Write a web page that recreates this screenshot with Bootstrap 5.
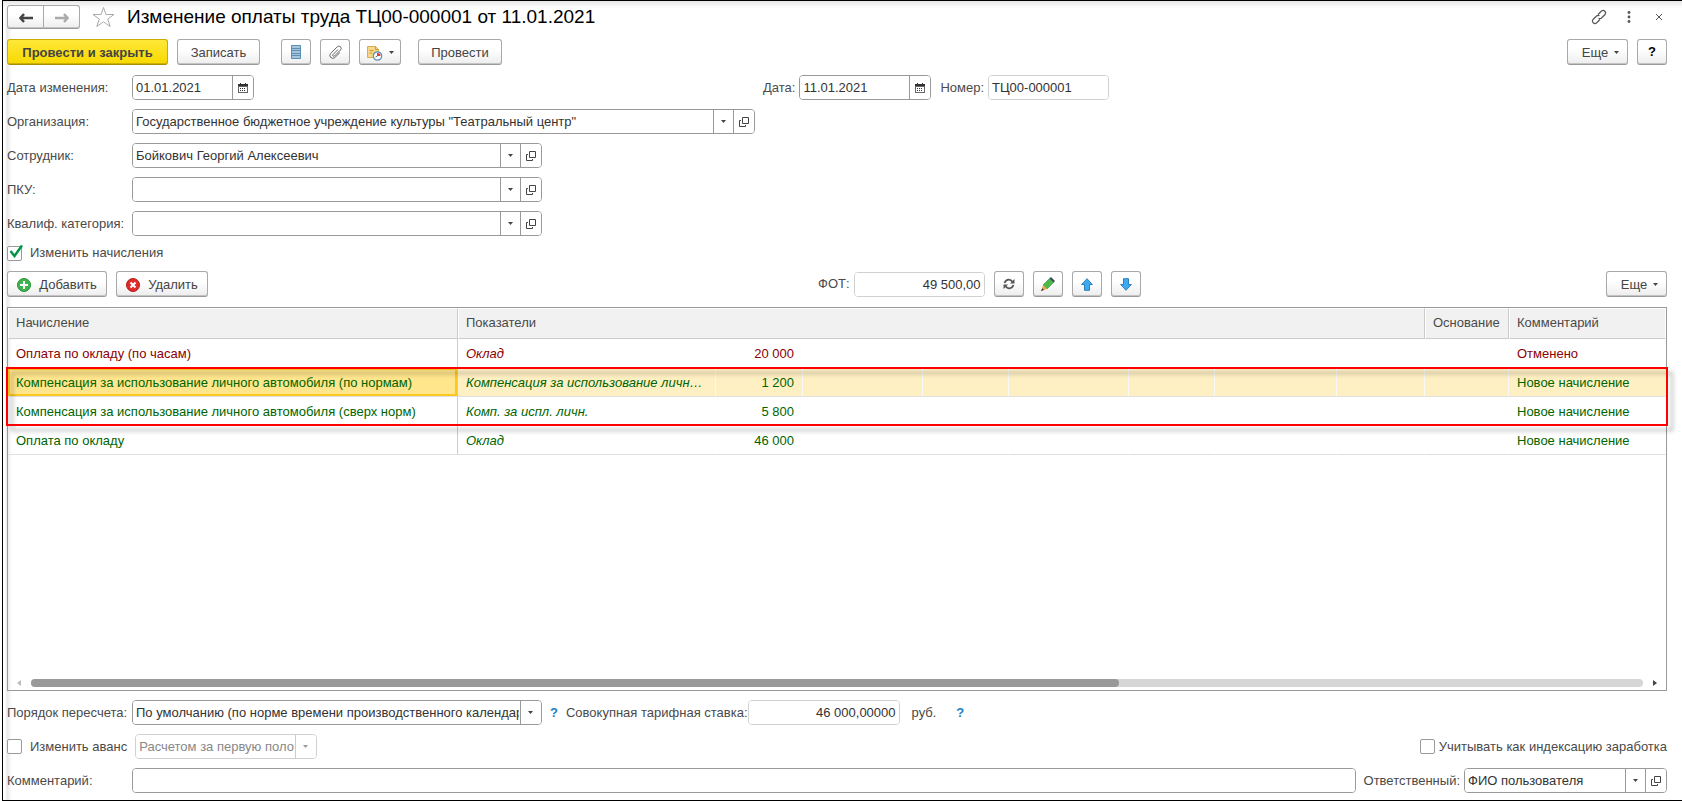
<!DOCTYPE html>
<html lang="ru">
<head>
<meta charset="utf-8">
<meta name="viewport" content="width=device-width, initial-scale=1">
<title>Изменение оплаты труда</title>
<link href="https://cdn.jsdelivr.net/npm/bootstrap@5.3.0/dist/css/bootstrap.min.css" rel="stylesheet">
<style>
  body { font-family: "Liberation Sans", Arial, sans-serif; font-size: 13px; line-height: 16px; color: #4a4a4a; background: #fff; }
  svg { display: block; flex: none; }
  .doc-window { margin-left: 2px; min-height: 100vh; padding: 4px 15px 7px 4px; border: solid #000; border-width: 1px 0 1px 1px;
    background: linear-gradient(#e6e6e6, #fff 7px) top / 100% 7px no-repeat, linear-gradient(90deg, #fff 2px, #e9e9e9 4px, #fff 9px) #fff; }
  .doc-title { font-size: 19px; line-height: 24px; color: #000; }
  .bar { margin-top: 10px; }
  .gap-tools { gap: 9px; }

  .cmd { height: 26px; padding: 1px 7px 0; font-size: 13px; line-height: 16px; color: #444; border: 1px solid #a9a9a9; border-bottom-color: #999; box-shadow: inset 0 -1px #c4c4c4; border-radius: 3px;
    background: linear-gradient(#fff 40%, #ededed); display: inline-flex; align-items: center; justify-content: center; }
  .cmd:hover { background: #f1f1f1; }
  .cmd-main { color: #444; font-weight: 700; width: 161px; border-color: #c9ac00; border-bottom-color: #a89000; box-shadow: inset 0 -1px #cdb200; background: linear-gradient(#ffe838, #f7d900); }
  .cmd-icon { width: 30px; padding: 0; }
  .cmd-write { width: 83px; }
  .cmd-post { width: 84px; }
  .cmd-add { width: 100px; }
  .cmd-del { width: 92px; }
  .cmd-more { width: 61px; gap: 6px; padding-left: 13px; }
  .cmd-menu { width: 42px; gap: 6px; }
  .nav-pair .cmd { height: 24px; width: 37px; }
  .bare { border: 0; padding: 0; background: none; color: #555; }

  .field-label { width: 125px; flex: none; white-space: nowrap; }
  .field { height: 25px; flex-wrap: nowrap; border: 1px solid #999; border-radius: 4px; background: #fff; overflow: hidden; }
  .field input, .field select { flex: 1 1 0; min-width: 0; height: 100%; border: 0; outline: 0; background-color: #fff; color: #333; padding: 0 3px; font-size: 13px; line-height: 16px; }
  .field select { appearance: none; padding-right: 22px; background-repeat: no-repeat; background-position: right 8px center, right 20px top;
    background-image: url("data:image/svg+xml,%3Csvg xmlns='http://www.w3.org/2000/svg' width='5' height='3'%3E%3Cpath d='M0 0h5L2.5 3z' fill='%23444'/%3E%3C/svg%3E"), linear-gradient(#999, #999); background-size: 5px 3px, 1px 100%; }
  .field select:disabled { color: #888; opacity: 1;
    background-image: url("data:image/svg+xml,%3Csvg xmlns='http://www.w3.org/2000/svg' width='5' height='3'%3E%3Cpath d='M0 0h5L2.5 3z' fill='%23999'/%3E%3C/svg%3E"), linear-gradient(#ccc, #ccc); }
  .field button { width: 21px; padding: 0; border: 0; border-left: 1px solid #999; background: #fff; color: #444; display: flex; align-items: center; justify-content: center; }
  .field-quiet { border-color: #d0d0d0; }
  .w-date { width: 122px; }
  .w-docdate { width: 132px; }
  .w-number { width: 121px; }
  .w-sum { width: 131px; }
  .w-rate { width: 152px; }
  .w-ref { width: 410px; }
  .w-advance { width: 182px; }
  .w-user { width: 203px; }
  .w-head { width: 748px; }
  .w-edit { width: 811px; }

  .tick { appearance: none; width: 15px; height: 15px; margin: 0; border: 1px solid #999; border-radius: 2px; background: #fff; flex: none; }
  .tick-wrap svg { left: 2px; top: -2px; pointer-events: none; }
  .hint { color: #1a7ec4; font-weight: 700; text-decoration: none; }

  .sheet { border: 1px solid #999; min-height: 200px; }
  .accruals { table-layout: fixed; width: 100%; border-collapse: separate; border-spacing: 0; }
  .accruals th { height: 31px; padding: 0 7px 2px; font-weight: 400; background: #f1f1f1; border: 1px solid #fff; border-right-color: #ccc; border-bottom-color: #ccc; white-space: nowrap; }
  .accruals th:last-child { border-right-color: #fff; }
  .accruals td { height: 29px; padding: 1px 8px 0; border-bottom: 1px solid #e0e0e0; border-right: 1px solid transparent; white-space: nowrap; color: #006400; }
  .accruals tbody tr:first-child td { color: #8b0000; }
  .accruals td:nth-child(1) { border-right-color: #ccc; }
  .accruals td:nth-child(2) { font-style: italic; }
  .accruals .picked td { background: #fff0c4; background-clip: padding-box; border-right-color: #f8f8f8; }
  .accruals .picked td:nth-child(1) { background: #ffe58c; box-shadow: inset 0 0 0 2px #fac81e; border-right-color: #ccc; }
  .callout-frame { left: -2px; right: -2px; top: 59px; height: 59px; border: 2px solid #f00; filter: drop-shadow(5px 5px 2px rgba(0,0,0,.3)); pointer-events: none; }
  .hscroll { padding: 0 9px 3px; gap: 10px; }
  .hscroll-track { height: 8px; border-radius: 4px; background: #d6d6d6; }
  .hscroll-thumb { height: 8px; border-radius: 4px; background: #999; }
</style>
</head>
<body>
<svg width="0" height="0" class="position-absolute" aria-hidden="true">
  <symbol id="i-caret" viewBox="0 0 5 3"><path d="M0 0h5L2.500 3z" fill="currentColor"/></symbol>
  <symbol id="i-open" viewBox="0 0 10 10"><path d="M3.500.500h6v6h-6zM2 3.500H.500v6h6V8" fill="none" stroke="currentColor"/></symbol>
  <symbol id="i-cal" viewBox="0 0 10 10"><path d="M0 1h10v9H0z" fill="#666"/><path d="M0 1h10v2H0zM2 0h1v1H2zM7 0h1v1H7z" fill="#333"/><path d="M1 4h8v5H1z" fill="#fff"/><path d="M2 5h1v1H2zM4 5h1v1H4zM6 5h1v1H6zM2 7h1v1H2zM4 7h1v1H4zM6 7h1v1H6z" fill="#333"/></symbol>
</svg>

<main class="doc-window d-flex flex-column">
  <header class="d-flex align-items-center">
    <div class="btn-group nav-pair">
      <button class="btn cmd" type="button" aria-label="Назад"><svg width="14" height="10"><path d="M5 1L1.500 5 5 9M2 5h12" fill="none" stroke="#444" stroke-width="2.500"/></svg></button>
      <button class="btn cmd" type="button" aria-label="Вперед"><svg width="14" height="10"><path d="M9 1l3.500 4L9 9M12 5H0" fill="none" stroke="#aaa" stroke-width="2.500"/></svg></button>
    </div>
    <button class="bare mx-2 px-1" type="button" aria-label="В избранное"><svg width="23" height="22"><path d="M11.500 1.500l2.500 7h8l-6.300 4.500 2.500 7.500-6.700-4.700-6.700 4.700 2.500-7.500L1 8.500h8z" fill="#fff" stroke="#aaa"/></svg></button>
    <h1 class="doc-title mb-0">Изменение оплаты труда ТЦ00-000001 от 11.01.2021</h1>
    <div class="d-flex align-items-center ms-auto gap-3 pe-1">
      <button class="bare" type="button" aria-label="Ссылка"><svg width="16" height="16" fill="none" stroke="#555" stroke-width="1.200"><path d="M7 5.500L10.500 2a2.500 2.500 0 0 1 3.500 3.500L10.500 9q-1.500 1.200-3 .3M9 10.500L5.500 14A2.500 2.500 0 0 1 2 10.500L5.500 7q1.500-1.200 3-.3"/></svg></button>
      <button class="bare me-1" type="button" aria-label="Меню"><svg width="12" height="12" fill="#555"><circle cx="6" cy="1.500" r="1.400"/><circle cx="6" cy="6" r="1.400"/><circle cx="6" cy="10.500" r="1.400"/></svg></button>
      <button class="bare" type="button" aria-label="Закрыть"><svg width="8" height="8"><path d="M1 1l6 6M7 1L1 7" stroke="#555"/></svg></button>
    </div>
  </header>

  <div class="d-flex align-items-center gap-tools bar">
    <button class="btn cmd cmd-main" type="button">Провести и закрыть</button>
    <button class="btn cmd cmd-write" type="button">Записать</button>
    <div class="d-flex gap-tools mx-2 ps-1">
      <button class="btn cmd cmd-icon" type="button" aria-label="Движения документа"><svg width="10" height="14"><path d="M0 0h10v14H0z" fill="#a5c6da"/><path d="M.5.500h9v13h-9zM1 3.500h8M1 5.500h8M1 8.500h8M1 10.500h8" fill="none" stroke="#5d8fb3"/></svg></button>
      <button class="btn cmd cmd-icon" type="button" aria-label="Файлы"><svg width="14" height="14" fill="none" stroke="#666"><path d="M10 4.500L5 9.500a1 1 0 0 0 1.500 1.500l6-6A2.200 2.200 0 0 0 9.300 1.800L2.500 8.500a3 3 0 0 0 4.200 4.200l5.300-5.200"/></svg></button>
      <button class="btn cmd cmd-menu" type="button" aria-label="Отчеты"><svg width="16" height="16"><path d="M.5 1.500h8l3 3v8h-11z" fill="#f7d889" stroke="#d9ae50"/><path d="M8.500 1.500v3h3M2.500 5.500h4M2.500 8h3" fill="none" stroke="#c99c3d"/><circle cx="10.500" cy="11" r="4.200" fill="#fff" stroke="#5b8dbb" stroke-width="1.200"/><path d="M10.500 11V8a3 3 0 0 1 3 3z" fill="#e04030"/><path d="M10.500 8v3l-2 1" fill="none" stroke="#3f76a8"/></svg><svg width="5" height="3"><use href="#i-caret"/></svg></button>
    </div>
    <button class="btn cmd cmd-post" type="button">Провести</button>
    <button class="btn cmd cmd-more ms-auto" type="button">Еще <svg width="5" height="3"><use href="#i-caret"/></svg></button>
    <button class="btn cmd cmd-icon fw-bold text-black" type="button">?</button>
  </div>

  <form class="d-flex flex-column flex-grow-1">
    <div class="d-flex align-items-center bar">
      <div class="d-flex align-items-center w-head">
        <label class="field-label" for="changeDate">Дата изменения:</label>
        <div class="input-group field w-date"><input id="changeDate" type="text" value="01.01.2021"><button type="button" aria-label="Календарь"><svg width="10" height="10"><use href="#i-cal"/></svg></button></div>
      </div>
      <div class="d-flex align-items-center gap-tools ps-2">
        <div class="d-flex align-items-center gap-1">
          <label for="docDate">Дата:</label>
          <div class="input-group field w-docdate"><input id="docDate" type="text" value="11.01.2021"><button type="button" aria-label="Календарь"><svg width="10" height="10"><use href="#i-cal"/></svg></button></div>
        </div>
        <div class="d-flex align-items-center gap-1">
          <label for="docNumber">Номер:</label>
          <div class="input-group field field-quiet w-number"><input id="docNumber" type="text" value="ТЦ00-000001" readonly></div>
        </div>
      </div>
    </div>
    <div class="d-flex flex-column gap-tools" style="margin-top:9px">
      <div class="d-flex align-items-center w-head">
        <label class="field-label" for="org">Организация:</label>
        <div class="input-group field flex-fill"><select id="org"><option>Государственное бюджетное учреждение культуры "Театральный центр"</option></select><button type="button" aria-label="Открыть"><svg width="10" height="10"><use href="#i-open"/></svg></button></div>
      </div>
      <div class="d-flex align-items-center">
        <label class="field-label" for="employee">Сотрудник:</label>
        <div class="input-group field w-ref"><select id="employee"><option>Бойкович Георгий Алексеевич</option></select><button type="button" aria-label="Открыть"><svg width="10" height="10"><use href="#i-open"/></svg></button></div>
      </div>
      <div class="d-flex align-items-center">
        <label class="field-label" for="pku">ПКУ:</label>
        <div class="input-group field w-ref"><select id="pku"><option></option></select><button type="button" aria-label="Открыть"><svg width="10" height="10"><use href="#i-open"/></svg></button></div>
      </div>
      <div class="d-flex align-items-center">
        <label class="field-label" for="category">Квалиф. категория:</label>
        <div class="input-group field w-ref"><select id="category"><option></option></select><button type="button" aria-label="Открыть"><svg width="10" height="10"><use href="#i-open"/></svg></button></div>
      </div>
      <div class="d-flex align-items-center">
        <span class="position-relative tick-wrap"><input class="tick d-block" type="checkbox" id="editAccruals" checked><svg class="position-absolute" width="14" height="14"><path d="M1.500 7l4 5L13 1.500" fill="none" stroke="#009646" stroke-width="2.500"/></svg></span>
        <label class="ps-1 ms-1" for="editAccruals">Изменить начисления</label>
      </div>
    </div>

    <div class="d-flex align-items-center bar">
      <div class="d-flex w-edit gap-tools">
        <button class="btn cmd cmd-add gap-2" type="button"><svg width="14" height="14"><circle cx="7" cy="7" r="6.500" fill="#3db54a" stroke="#23913a"/><path d="M7 3v8M3 7h8" stroke="#fff" stroke-width="2"/></svg>Добавить</button>
        <button class="btn cmd cmd-del gap-2" type="button"><svg width="14" height="14"><circle cx="7" cy="7" r="6.500" fill="#dd2b2b" stroke="#b81c1c"/><path d="M4.500 4.500l5 5M9.500 4.500l-5 5" stroke="#fff" stroke-width="2"/></svg>Удалить</button>
      </div>
      <div class="d-flex align-items-center gap-tools">
        <div class="d-flex align-items-center gap-1">
          <label for="fot">ФОТ:</label>
          <div class="input-group field field-quiet w-sum"><input id="fot" class="text-end" type="text" value="49 500,00" readonly></div>
        </div>
        <button class="btn cmd cmd-icon" type="button" aria-label="Обновить"><svg width="12" height="12" fill="none" stroke="#555" stroke-width="1.800"><path d="M1.500 5Q3 1.500 6 1.700q2 .1 3.500 2M10.500 7Q9 10.500 6 10.300q-2-.1-3.500-2"/><path d="M11.500 1v4.500H7zM.5 11V6.500H5z" fill="#555" stroke="none"/></svg></button>
        <button class="btn cmd cmd-icon" type="button" aria-label="Изменить"><svg width="14" height="14"><path d="M10 0l4 4-2 2-4-4z" fill="#3c4a5c"/><path d="M8.500 1.500l4 4-6.500 6.500-4-4z" fill="#4fb848" stroke="#2f8f3a" stroke-width=".6"/><path d="M2 8l4 4-5.500 1.700z" fill="#f3a74a"/><path d="M1.200 11.200l1.800 1.700L0 14z" fill="#333"/></svg></button>
        <button class="btn cmd cmd-icon" type="button" aria-label="Вверх"><svg width="12" height="13"><path d="M6 .7l5.300 5.800H8.500v5.800h-5V6.500H.7z" fill="#3fa9f0" stroke="#2a7fbd"/></svg></button>
        <button class="btn cmd cmd-icon" type="button" aria-label="Вниз"><svg width="12" height="13"><path d="M6 12.300L.7 6.500h2.800V.7h5v5.800h2.800z" fill="#3fa9f0" stroke="#2a7fbd"/></svg></button>
      </div>
      <button class="btn cmd cmd-more ms-auto" type="button">Еще <svg width="5" height="3"><use href="#i-caret"/></svg></button>
    </div>

    <section class="sheet position-relative flex-grow-1 d-flex flex-column bar">
      <table class="accruals">
        <colgroup><col style="width:450px"><col style="width:258px"><col style="width:87px"><col style="width:120px"><col style="width:86px"><col style="width:120px"><col style="width:86px"><col style="width:122px"><col><col style="width:84px"><col style="width:157px"></colgroup>
        <thead><tr><th>Начисление</th><th colspan="8">Показатели</th><th>Основание</th><th>Комментарий</th></tr></thead>
        <tbody>
          <tr><td>Оплата по окладу (по часам)</td><td>Оклад</td><td class="text-end">20 000</td><td></td><td></td><td></td><td></td><td></td><td></td><td></td><td>Отменено</td></tr>
          <tr class="picked"><td>Компенсация за использование личного автомобиля (по нормам)</td><td>Компенсация за использование личн…</td><td class="text-end">1 200</td><td></td><td></td><td></td><td></td><td></td><td></td><td></td><td>Новое начисление</td></tr>
          <tr><td>Компенсация за использование личного автомобиля (сверх норм)</td><td>Комп. за испл. личн.</td><td class="text-end">5 800</td><td></td><td></td><td></td><td></td><td></td><td></td><td></td><td>Новое начисление</td></tr>
          <tr><td>Оплата по окладу</td><td>Оклад</td><td class="text-end">46 000</td><td></td><td></td><td></td><td></td><td></td><td></td><td></td><td>Новое начисление</td></tr>
        </tbody>
      </table>
      <div class="callout-frame position-absolute"></div>
      <div class="hscroll d-flex align-items-center mt-auto">
        <svg width="4" height="6"><path d="M4 0v6L0 3z" fill="#bbb"/></svg>
        <div class="hscroll-track flex-fill"><div class="hscroll-thumb" style="width:67.500%"></div></div>
        <svg width="4" height="6"><path d="M0 0v6l4-3z" fill="#444"/></svg>
      </div>
    </section>

    <div class="d-flex flex-column gap-tools" style="margin-top:9px">
      <div class="d-flex align-items-center">
        <label class="field-label" for="recalc">Порядок пересчета:</label>
        <div class="input-group field w-ref"><select id="recalc"><option>По умолчанию (по норме времени производственного календаря)</option></select></div>
        <a class="hint px-2" href="#">?</a>
        <label for="rate">Совокупная тарифная ставка:</label>
        <div class="input-group field field-quiet w-rate"><input id="rate" class="text-end" type="text" value="46 000,00000" readonly></div>
        <span class="ms-2 me-3 px-1">руб.</span>
        <a class="hint" href="#">?</a>
      </div>
      <div class="d-flex align-items-center">
        <input class="tick" type="checkbox" id="advance"><label class="ps-1 mx-1 pe-1" for="advance">Изменить аванс</label>
        <div class="input-group field field-quiet w-advance"><select id="advanceKind" aria-label="Способ расчета аванса" disabled><option>Расчетом за первую половину месяца</option></select></div>
        <input class="tick ms-auto" type="checkbox" id="indexing"><label class="ps-1" for="indexing">Учитывать как индексацию заработка</label>
      </div>
      <div class="d-flex align-items-center">
        <label class="field-label" for="comment">Комментарий:</label>
        <div class="input-group field flex-fill w-auto"><input id="comment" type="text"></div>
        <label class="ms-2 me-1" for="user">Ответственный:</label>
        <div class="input-group field w-user"><select id="user"><option>ФИО пользователя</option></select><button type="button" aria-label="Открыть"><svg width="10" height="10"><use href="#i-open"/></svg></button></div>
      </div>
    </div>
  </form>
</main>
<script src="https://cdn.jsdelivr.net/npm/bootstrap@5.3.0/dist/js/bootstrap.bundle.min.js"></script>
</body>
</html>
